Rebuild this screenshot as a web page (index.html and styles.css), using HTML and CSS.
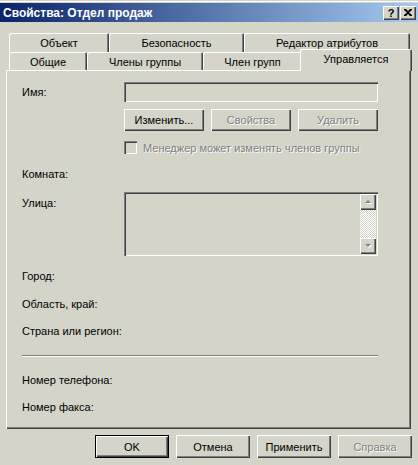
FILE: index.html
```html
<!DOCTYPE html>
<html lang="ru">
<head>
  <meta charset="UTF-8" />
  <title>Свойства: Отдел продаж</title>
  <link rel="stylesheet" href="styles.css">
</head>
<body>

  <div class="window">
    <div class="titlebar">
      <span class="title">Свойства: Отдел продаж</span>
      <div class="caption-buttons">
        <span class="cap-btn">?</span>
        <span class="cap-btn">
          <svg width="8" height="7" viewBox="0 0 8 7"><path d="M0 0h2l2 2 2-2h2v1L5 3.5 8 6v1H6L4 5 2 7H0V6l3-2.5L0 1z" fill="#000"/></svg>
        </span>
      </div>
    </div>

    <div class="client">
      <div class="tabs">
        <div class="tab-row back">
          <div class="tab w-object">Объект</div>
          <div class="tab w-security">Безопасность</div>
          <div class="tab w-attr">Редактор атрибутов</div>
        </div>
        <div class="tab-row front">
          <div class="tab w-general">Общие</div>
          <div class="tab w-members">Члены группы</div>
          <div class="tab w-memberof">Член групп</div>
          <div class="tab selected">Управляется</div>
        </div>
      </div>

      <div class="panel">
        <div class="row">
          <span class="label">Имя:</span>
          <div class="textbox"></div>
        </div>

        <div class="btn-row">
          <button class="btn">Изменить...</button>
          <button class="btn disabled">Свойства</button>
          <button class="btn disabled">Удалить</button>
        </div>

        <div class="check-row">
          <span class="checkbox"></span>
          <span class="disabled-text">Менеджер может изменять членов группы</span>
        </div>

        <div class="text-row gap-14">Комната:</div>

        <div class="row street-row">
          <span class="label top">Улица:</span>
          <div class="textarea">
            <div class="scrollbar">
              <span class="scroll-btn">
                <svg width="7" height="5" viewBox="0 0 7 5"><path d="M1 4h6L4 1z" fill="#fff"/><path d="M0 3h6L3 0z" fill="#808080"/></svg>
              </span>
              <span class="scroll-track"></span>
              <span class="scroll-btn">
                <svg width="7" height="5" viewBox="0 0 7 5"><path d="M1 1h6L4 4z" fill="#fff"/><path d="M0 0h6L3 3z" fill="#808080"/></svg>
              </span>
            </div>
          </div>
        </div>

        <div class="text-row gap-14">Город:</div>
        <div class="text-row gap-15">Область, край:</div>
        <div class="text-row gap-14">Страна или регион:</div>

        <div class="separator"></div>

        <div class="text-row gap-17">Номер телефона:</div>
        <div class="text-row gap-14">Номер факса:</div>
      </div>

      <div class="dialog-buttons">
        <button class="btn wide default">OK</button>
        <button class="btn wide">Отмена</button>
        <button class="btn wide">Применить</button>
        <button class="btn wide disabled">Справка</button>
      </div>
    </div>
  </div>

</body>
</html>
```

FILE: styles.css
```css
* { margin: 0; padding: 0; box-sizing: border-box; }

body {
  font-family: "Liberation Sans", Arial, sans-serif;
  font-size: 11px;
  color: #000;
  background-color: #d4d4c8;
  overflow: hidden;
}

.window {
  width: 418px;
  height: 465px;
  padding-top: 3px;
  background: linear-gradient(to bottom, #d4d4c8 0 1px, #fff 1px 2px, #d4d4c8 2px);
}

/* title bar */
.titlebar {
  display: flex;
  align-items: center;
  height: 19px;
  padding: 0 2px 0 3px;
  background: linear-gradient(to right, #0a246a, #a6caf0);
  color: #fff;
  font-size: 12px;
  font-weight: bold;
}

.caption-buttons {
  display: flex;
  gap: 1px;
  margin-left: auto;
}

.cap-btn {
  display: flex;
  align-items: center;
  justify-content: center;
  width: 16px;
  height: 14px;
  background-color: #d4d4c8;
  color: #000;
  font-size: 11px;
  font-weight: bold;
  box-shadow: inset 1px 1px #fff, inset -1px -1px #404040, inset -2px -2px #808080;
}

/* tabs */
.client {
  padding-top: 11px;
}

.tabs {
  margin-left: 9px;
  width: 401px;
}

.tab-row {
  display: flex;
  align-items: flex-start;
}

.tab-row.back { height: 19px; }
.tab-row.front { height: 18px; }

.tab {
  display: flex;
  align-items: center;
  justify-content: center;
  height: 100%;
  padding-top: 1px;
  background-color: #d4d4c8;
  border-radius: 2px 2px 0 0;
  box-shadow: inset 1px 1px #fff, inset -1px 0 #404040, inset -2px 0 #808080;
  white-space: nowrap;
}

.w-object { width: 100px; }
.w-security { width: 135px; }
.w-attr { width: 166px; }
.w-general { width: 78px; }
.w-members { width: 116px; }
.w-memberof { width: 99px; }

.tab.selected {
  position: relative;
  z-index: 1;
  width: 112px;
  height: 22px;
  margin: -3px -2px 0 -2px;
  padding: 0 0 3px;
}

/* panel */
.panel {
  margin-left: 6px;
  width: 405px;
  height: 359px;
  padding: 12px 0 0 16px;
  box-shadow: inset 1px 1px #fff, inset -1px -1px #404040, inset -2px -2px #808080;
}

.row {
  display: flex;
  align-items: center;
}

.label {
  width: 102px;
  flex: none;
}

.label.top {
  align-self: flex-start;
  padding-top: 5px;
}

.textbox {
  width: 254px;
  height: 20px;
  box-shadow: inset 1px 1px #808080, inset 2px 2px #404040, inset -1px -1px #fff, inset -2px -2px #d4d4c8;
}

.btn-row {
  display: flex;
  gap: 7px;
  margin: 7px 0 0 102px;
}

.btn {
  width: 80px;
  height: 22px;
  border: none;
  background-color: #d4d4c8;
  font-family: "Liberation Sans", Arial, sans-serif;
  font-size: 11px;
  color: #000;
  box-shadow: inset 1px 1px #fff, inset -1px -1px #404040, inset -2px -2px #808080;
}

.btn.disabled,
.disabled-text {
  color: #808080;
  text-shadow: 1px 1px #fff;
}

.check-row {
  display: flex;
  align-items: center;
  gap: 6px;
  height: 13px;
  margin: 10px 0 0 102px;
}

.checkbox {
  width: 13px;
  height: 13px;
  flex: none;
  box-shadow: inset 1px 1px #808080, inset 2px 2px #404040, inset -1px -1px #fff, inset -2px -2px #d4d4c8;
}

.text-row {
  height: 13px;
  line-height: 13px;
}

.gap-14 { margin-top: 14px; }
.gap-15 { margin-top: 15px; }
.gap-17 { margin-top: 17px; }

.street-row {
  margin-top: 11px;
}

.textarea {
  display: flex;
  justify-content: flex-end;
  width: 254px;
  height: 64px;
  padding: 2px;
  box-shadow: inset 1px 1px #808080, inset 2px 2px #404040, inset -1px -1px #fff, inset -2px -2px #d4d4c8;
}

.scrollbar {
  display: flex;
  flex-direction: column;
  width: 16px;
}

.scroll-btn {
  display: flex;
  align-items: center;
  justify-content: center;
  height: 16px;
  background-color: #d4d4c8;
  box-shadow: inset 1px 1px #fff, inset -1px -1px #404040, inset -2px -2px #808080;
}

.scroll-track {
  flex: 1;
  background-image: conic-gradient(#fff 25%, #d4d4c8 0 50%, #fff 0 75%, #d4d4c8 0);
  background-size: 2px 2px;
}

.separator {
  width: 356px;
  height: 2px;
  margin-top: 17px;
  border-top: 1px solid #808080;
  border-bottom: 1px solid #fff;
}

/* bottom buttons */
.dialog-buttons {
  display: flex;
  gap: 7px;
  margin: 6px 0 0 95px;
}

.btn.wide {
  width: 74px;
  height: 23px;
}

.btn.default {
  border: 1px solid #000;
}
```
